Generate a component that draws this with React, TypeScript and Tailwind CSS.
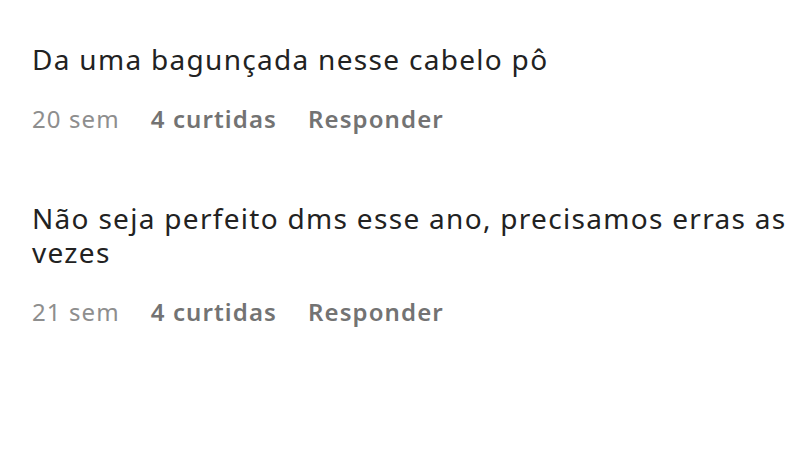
const comments = [
  { text: "Da uma bagunçada nesse cabelo pô", time: "20 sem", likes: "4 curtidas" },
  { text: "Não seja perfeito dms esse ano, precisamos erras as vezes", time: "21 sem", likes: "4 curtidas" },
];

export default function App() {
  return (
    <div className="w-[800px] h-[450px] bg-white pl-[32px] pt-[42px] font-['Noto_Sans',sans-serif] overflow-hidden">
      <div className="flex flex-col gap-[67px] w-[765px]">
        {comments.map((c, i) => (
          <div key={i} className="flex flex-col">
            <p className="text-[28px] leading-[34px] tracking-[1.3px] text-[#222222]">{c.text}</p>
            <div className="flex items-center gap-[31px] mt-[28px] text-[24px] leading-[30px] tracking-[1.1px]">
              <span className="text-[#8e8e8e]">{c.time}</span>
              <span className="text-[#737373] font-semibold">{c.likes}</span>
              <span className="text-[#737373] font-semibold">Responder</span>
            </div>
          </div>
        ))}
      </div>
    </div>
  );
}
